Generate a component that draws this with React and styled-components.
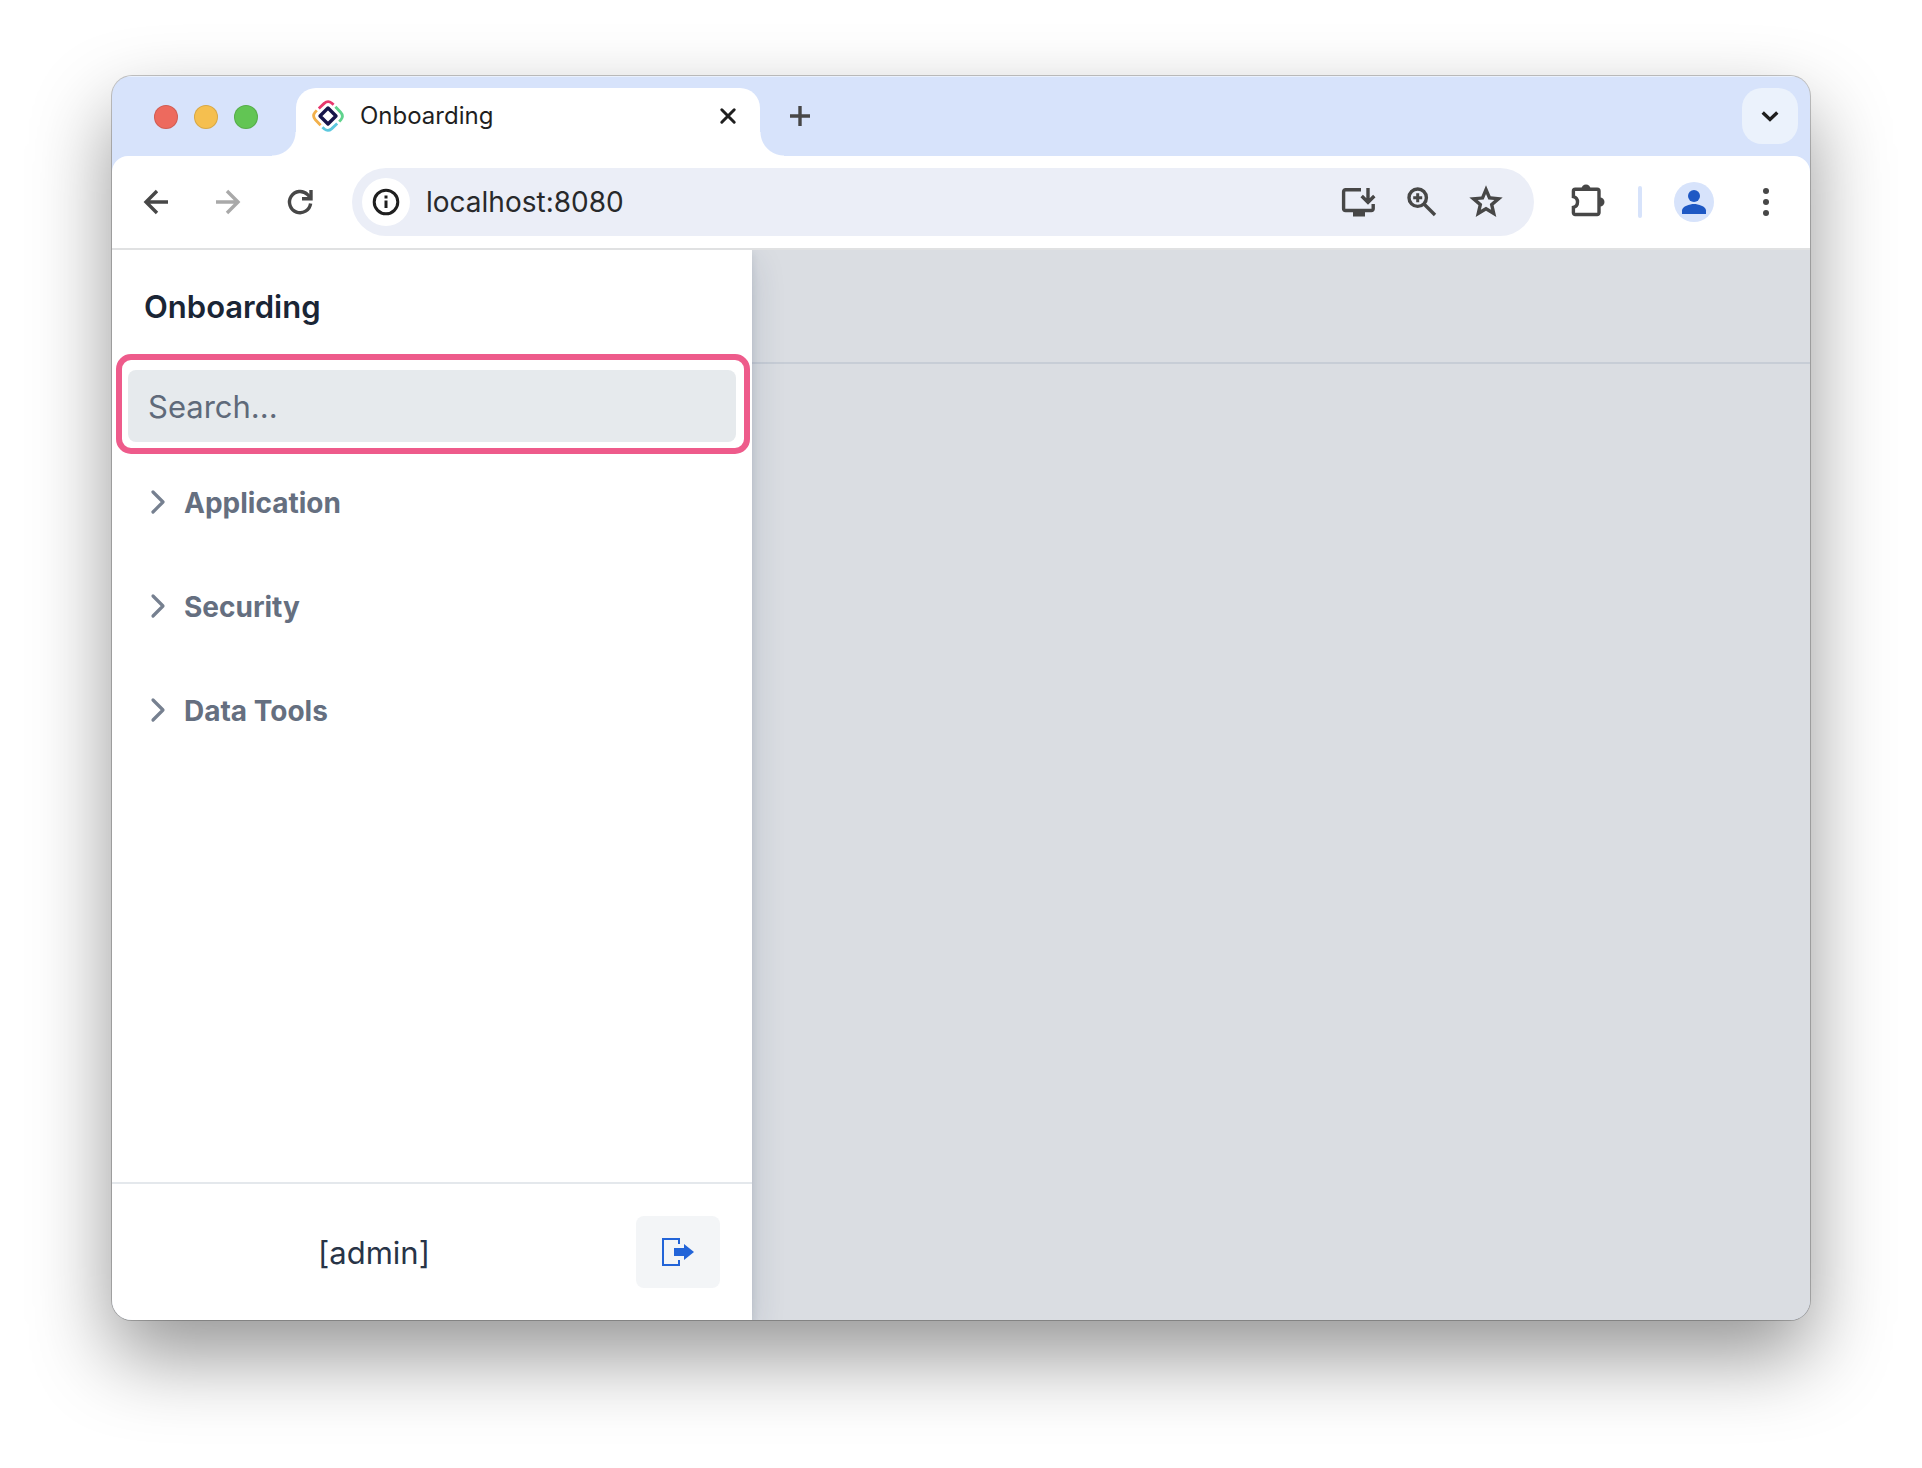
import React, { useState } from "react";
import styled, { createGlobalStyle } from "styled-components";

const GlobalStyle = createGlobalStyle`
  * {
    box-sizing: border-box;
  }
  body {
    margin: 0;
    background: #fff;
    font-family: Inter, "Liberation Sans", sans-serif;
  }
  button {
    border: none;
    padding: 0;
    background: none;
    font-family: inherit;
    cursor: pointer;
  }
`;

const Page = styled.div`
  display: flex;
  min-height: 100vh;
  padding: 76px 112px 148px;
`;

const Window = styled.div`
  flex: 1;
  display: flex;
  flex-direction: column;
  min-width: 0;
  overflow: hidden;
  border-radius: 20px;
  background: #d7e3fb;
  box-shadow: 0 0 0 1px rgba(0, 0, 0, 0.22), 0 36px 80px rgba(0, 0, 0, 0.42);
`;

/* Tab strip */

const TabStrip = styled.div`
  display: flex;
  height: 80px;
  padding: 12px 12px 0 42px;
  box-shadow: inset 0 1px 0 #eaf1fd;
`;

const Lights = styled.div`
  display: flex;
  gap: 16px;
  padding-top: 17px;
  margin-right: 38px;
`;

const Light = styled.button`
  width: 24px;
  height: 24px;
  border-radius: 50%;
  background: ${props => props.$color};
  box-shadow: inset 0 0 0 1px rgba(0, 0, 0, 0.12);
`;

const Tab = styled.div`
  position: relative;
  display: flex;
  align-items: center;
  width: 464px;
  padding: 0 12px 12px 16px;
  border-radius: 20px 20px 0 0;
  background: #fff;
  color: #1f1f1f;

  /* curved feet on both sides */
  &::before,
  &::after {
    content: "";
    position: absolute;
    bottom: 0;
    width: 24px;
    height: 24px;
  }
  &::before {
    right: 100%;
    background: radial-gradient(circle at 0 0, transparent 23px, #fff 24px);
  }
  &::after {
    left: 100%;
    background: radial-gradient(circle at 100% 0, transparent 23px, #fff 24px);
  }
`;

const TabTitle = styled.span`
  flex: 1;
  margin-left: 16px;
  font-size: 24px;
  line-height: 32px;
`;

const IconButton = styled.button`
  display: flex;
  flex: none;
  align-items: center;
  justify-content: center;
  width: 40px;
  height: 40px;
  color: ${props => props.$color || "#474747"};
`;

const NewTab = styled(IconButton)`
  margin: 8px 0 0 20px;
`;

const TabSearch = styled(IconButton)`
  width: 56px;
  height: 56px;
  margin-left: auto;
  border-radius: 20px;
  background: #ebf2fc;
`;

/* Toolbar */

const Toolbar = styled.div`
  display: flex;
  align-items: center;
  gap: 32px;
  height: 94px;
  padding: 0 24px;
  border-bottom: 2px solid #e0e1e2;
  border-radius: 16px 16px 0 0;
  background: #fff;
`;

const Omnibox = styled.div`
  flex: 1;
  display: flex;
  align-items: center;
  gap: 24px;
  min-width: 0;
  height: 68px;
  padding: 0 28px 0 10px;
  border-radius: 34px;
  background: #ebeef7;
`;

const SiteInfo = styled(IconButton)`
  width: 48px;
  height: 48px;
  border-radius: 50%;
  background: #fff;
`;

const Address = styled.input`
  flex: 1;
  min-width: 0;
  margin-left: -8px;
  padding: 0;
  border: none;
  outline: none;
  background: transparent;
  color: #28292b;
  font-family: inherit;
  font-size: 28px;
  line-height: 36px;
`;

const Divider = styled.div`
  width: 4px;
  height: 32px;
  border-radius: 2px;
  background: #d7e3fb;
`;

const Profile = styled(IconButton)`
  border-radius: 50%;
  background: #d7e3fb;
`;

/* Application */

const AppLayout = styled.div`
  flex: 1;
  display: flex;
  min-height: 0;
  overflow: hidden;
  background: #dadde2;
`;

const Drawer = styled.aside`
  position: relative;
  flex: 0 0 640px;
  display: flex;
  flex-direction: column;
  background: #fff;
  box-shadow: 0 4px 8px rgba(28, 52, 84, 0.12), 0 12px 32px rgba(28, 52, 84, 0.16);
`;

const AppTitle = styled.h1`
  margin: 0;
  padding: 37px 32px 31px;
  color: #1a2535;
  font-size: 31px;
  font-weight: 600;
  line-height: 40px;
`;

const SearchFrame = styled.div`
  margin: -4px 2px 12px 4px;
  padding: 10px 8px 6px 6px;
  border: 6px solid #ee5b8b;
  border-radius: 15px;
`;

const SearchInput = styled.input`
  display: block;
  width: 100%;
  height: 72px;
  padding: 0 20px;
  border: none;
  border-radius: 8px;
  outline: none;
  background: #e6eaed;
  color: #1a2535;
  font-family: inherit;
  font-size: 31px;

  &::placeholder {
    color: #5f6a7a;
    opacity: 1;
  }
`;

const Menu = styled.nav`
  flex: 1;
  display: flex;
  flex-direction: column;
  gap: 32px;
`;

const MenuItem = styled.button`
  display: flex;
  align-items: center;
  gap: 12px;
  height: 72px;
  padding: 0 32px;
  color: #656f80;
  font-size: 28px;
  font-weight: 700;
  line-height: 36px;
`;

const MenuLabel = styled.span`
  padding-top: 2px;
`;

const Footer = styled.footer`
  display: flex;
  align-items: center;
  gap: 32px;
  padding: 32px;
  border-top: 2px solid #e4e8ec;
`;

const UserName = styled.span`
  flex: 1;
  padding-top: 2px;
  text-align: center;
  color: #283447;
  font-size: 31px;
  line-height: 40px;
`;

const LogoutButton = styled.button`
  display: flex;
  align-items: center;
  justify-content: center;
  width: 84px;
  height: 72px;
  border-radius: 8px;
  background: #f3f5f7;
  color: #2264d8;
`;

const Content = styled.main`
  flex: 1;
  min-width: 0;
`;

const Navbar = styled.header`
  height: 114px;
  border-bottom: 2px solid #c7cdd6;
`;

/* Icons */

const Icon = ({ size = 40, width = 3.4, children }) => (
  <svg
    width={size}
    height={size}
    viewBox={`0 0 ${size} ${size}`}
    fill="none"
    stroke="currentColor"
    strokeWidth={width}
    aria-hidden="true"
  >
    {children}
  </svg>
);

const Favicon = () => (
  <Icon size={32} width={2.8}>
    <path d="M16 8L24 16 16 24 8 16z" stroke="#17154a" strokeWidth="3.4" strokeLinejoin="round" />
    <path d="M6.800 8.600l5.400-5.200q3.800-3.400 7.400-.4l2 1.800" stroke="#e8386d" />
    <path d="M23.400 6.800l5.200 5.400q3.400 3.800.4 7.400l-1.800 2" stroke="#5fd38d" />
    <path d="M25.200 23.400l-5.400 5.200q-3.800 3.400-7.400.4l-2-1.800" stroke="#5cc8de" />
    <path d="M8.600 25.200l-5.200-5.400q-3.400-3.800-.4-7.400l1.800-2" stroke="#f2b04a" />
  </Icon>
);

const STAR =
  "M22 9.24l-7.19-.62L12 2 9.19 8.63 2 9.24l5.46 4.73L5.82 21 12 17.27 18.18 21l-1.63-7.03z";

const StarIcon = () => (
  <svg width="40" height="40" viewBox="0 0 24 24" fill="currentColor" aria-hidden="true">
    <path d={STAR} />
    <path d={STAR} fill="#ebeef7" transform="translate(6 6.15) scale(0.5)" />
  </svg>
);

const sections = ["Application", "Security", "Data Tools"];

const App = () => {
  const [search, setSearch] = useState("");

  return (
    <Page>
      <GlobalStyle />
      <Window>
        <TabStrip>
          <Lights>
            <Light $color="#ed6a5e" aria-label="Close window" />
            <Light $color="#f5bf4f" aria-label="Minimize window" />
            <Light $color="#62c554" aria-label="Zoom window" />
          </Lights>
          <Tab>
            <Favicon />
            <TabTitle>Onboarding</TabTitle>
            <IconButton $color="#1f1f1f" aria-label="Close tab">
              <Icon width={3}>
                <path d="M13.800 13.800l12.400 12.400M26.200 13.800L13.800 26.200" strokeLinecap="round" />
              </Icon>
            </IconButton>
          </Tab>
          <NewTab aria-label="New tab">
            <Icon width={3.4}>
              <path d="M20 10v20M10 20h20" />
            </Icon>
          </NewTab>
          <TabSearch $color="#1f1f1f" aria-label="Search tabs">
            <Icon width={3.4}>
              <path d="M12.7 16.5l7.3 7 7.3-7" />
            </Icon>
          </TabSearch>
        </TabStrip>

        <Toolbar>
          <IconButton aria-label="Back">
            <Icon>
              <path d="M32 20H10.500M21 9L10 20l11 11" />
            </Icon>
          </IconButton>
          <IconButton $color="#a9a9a9" aria-label="Forward">
            <Icon>
              <path d="M8 20h21.500M19 9l11 11-11 11" />
            </Icon>
          </IconButton>
          <IconButton aria-label="Reload">
            <Icon>
              <path d="M30.6 21.5A10.6 10.6 0 1 1 27.6 12.6L31 16" />
              <path d="M31 8V16.7H22" />
            </Icon>
          </IconButton>
          <Omnibox>
            <SiteInfo $color="#1f1f1f" aria-label="Site information">
              <Icon width={3}>
                <circle cx="20" cy="20" r="11.8" />
                <path d="M20 18.5V26M20 13.5v3" />
              </Icon>
            </SiteInfo>
            <Address aria-label="Address" defaultValue="localhost:8080" />
            <IconButton aria-label="Install app">
              <Icon>
                <path d="M23 7.7H7.6a2 2 0 0 0-2 2v16.8a2 2 0 0 0 2 2h25.600a2 2 0 0 0 2-2V22" />
                <path d="M15 31.5h12" strokeWidth="6" />
                <path d="M30 6v14M23.7 14l6.3 6.3 6.3-6.3" />
              </Icon>
            </IconButton>
            <IconButton aria-label="Zoom">
              <Icon>
                <circle cx="15.7" cy="15.7" r="8.7" />
                <path d="M21.5 21.5L33 33" />
                <path d="M15.7 11.2v9M11.2 15.7h9" strokeWidth="3" />
              </Icon>
            </IconButton>
            <IconButton aria-label="Bookmark">
              <StarIcon />
            </IconButton>
          </Omnibox>
          <IconButton aria-label="Extensions">
            <Icon width={3.4}>
              <path d="M9.200 7.300H31.200a1.800 1.800 0 0 1 1.800 1.800V30.700a1.800 1.800 0 0 1-1.800 1.800H9.200a1.800 1.800 0 0 1-1.800-1.800V25.400a5.600 5.600 0 0 0 0-10.800V9.100A1.800 1.800 0 0 1 9.200 7.300z" />
              <path d="M15.500 7a4.500 4.500 0 0 1 9 0zM34 15.500a4.500 4.500 0 0 1 0 9z" fill="currentColor" stroke="none" />
            </Icon>
          </IconButton>
          <Divider />
          <Profile $color="#1e58c4" aria-label="Profile">
            <svg width="40" height="40" viewBox="0 0 40 40" fill="currentColor" aria-hidden="true">
              <circle cx="20" cy="14" r="6" />
              <path d="M8 32v-3.4c0-4.4 8-6.6 12-6.6s12 2.200 12 6.600V32z" />
            </svg>
          </Profile>
          <IconButton aria-label="Menu">
            <svg width="40" height="40" viewBox="0 0 40 40" fill="currentColor" aria-hidden="true">
              <circle cx="20" cy="9" r="3" />
              <circle cx="20" cy="20" r="3" />
              <circle cx="20" cy="31" r="3" />
            </svg>
          </IconButton>
        </Toolbar>

        <AppLayout>
          <Drawer>
            <AppTitle>Onboarding</AppTitle>
            <SearchFrame>
              <SearchInput
                type="text"
                aria-label="Search"
                placeholder="Search..."
                value={search}
                onChange={e => setSearch(e.target.value)}
              />
            </SearchFrame>
            <Menu>
              {sections.map(section => (
                <MenuItem key={section} aria-expanded="false">
                  <Icon size={28} width={3.2}>
                    <path d="M9 4l10 10L9 24" stroke="#768090" strokeLinecap="round" strokeLinejoin="round" />
                  </Icon>
                  <MenuLabel>{section}</MenuLabel>
                </MenuItem>
              ))}
            </Menu>
            <Footer>
              <UserName>[admin]</UserName>
              <LogoutButton aria-label="Log out">
                <svg width="32" height="32" viewBox="0 0 16 16" fill="currentColor" aria-hidden="true">
                  <path d="M9 4V1H0v14h9v-3H8v2H1V2h7v2z" />
                  <path d="M16 8l-5-4v2H6v4h5v2z" />
                </svg>
              </LogoutButton>
            </Footer>
          </Drawer>
          <Content>
            <Navbar />
          </Content>
        </AppLayout>
      </Window>
    </Page>
  );
};

export default App;
